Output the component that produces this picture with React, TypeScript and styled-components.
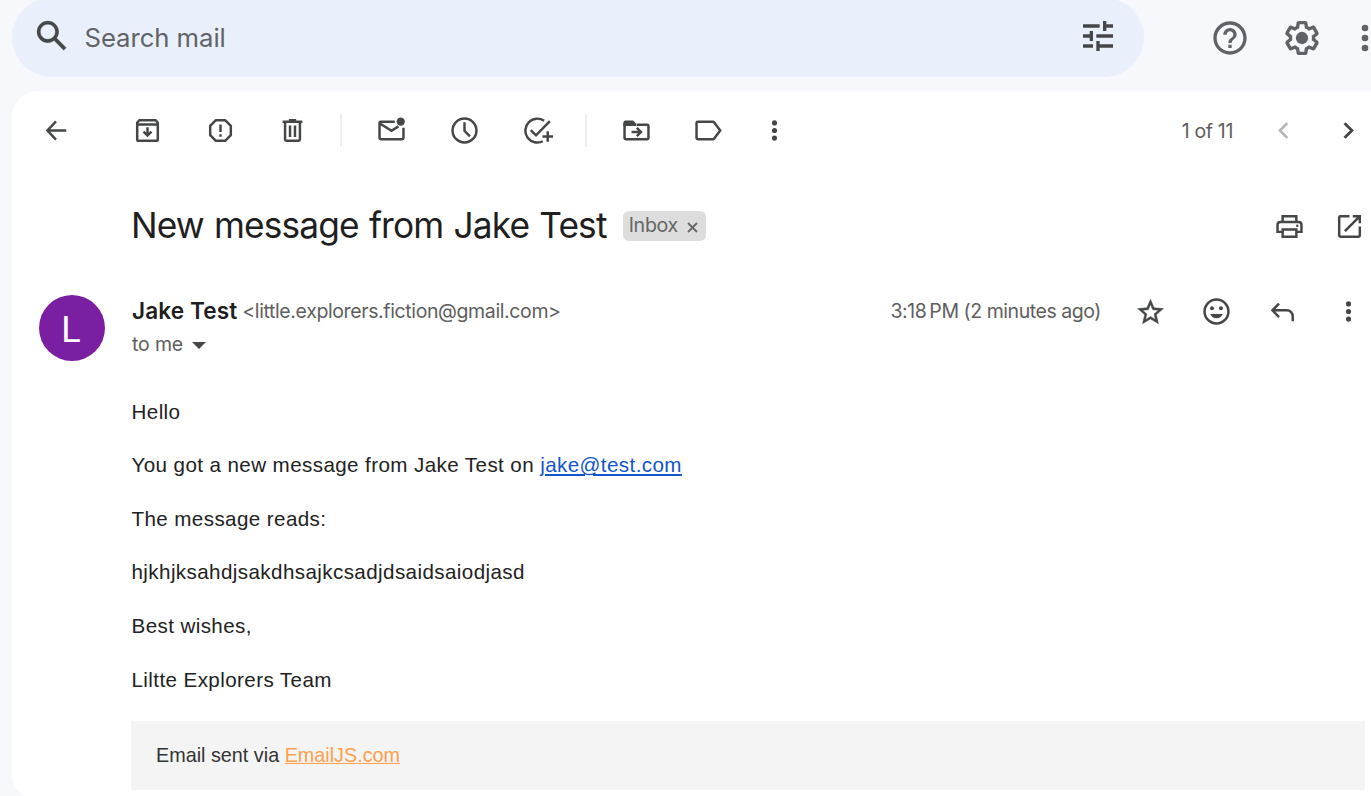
import React from 'react';
import styled, { createGlobalStyle } from 'styled-components';

const GlobalStyle = createGlobalStyle`
  *, *::before, *::after { box-sizing: border-box; }
  html, body { margin: 0; padding: 0; overflow: hidden; background: #f6f8fc; }
  p, h1 { margin: 0; font-weight: 400; }
`;

const uiFont = `Inter, Roboto, sans-serif`;

const Page = styled.div`
  width: 100%;
  height: 796px;
  overflow: hidden;
  background: #f6f8fc;
  color: #444746;
  font-family: ${uiFont};
`;

const Header = styled.header`
  display: flex;
  align-items: flex-start;
  height: 91px;
  padding-left: 12px;
`;

const SearchBar = styled.div`
  display: flex;
  align-items: center;
  flex: none;
  width: 1132px;
  height: 79px;
  margin-top: -2px;
  padding: 0 26px 3px 19.5px;
  border-radius: 40px;
  background: #e9f0fb;
`;

const SearchText = styled.span`
  flex: 1;
  margin-left: 13px;
  padding-top: 2px;
  color: #5f6368;
  font-size: 25.7px;
  font-weight: 370;
  letter-spacing: -0.05px;
`;

const HeaderActions = styled.div`
  display: flex;
  align-items: center;
  flex: none;
  height: 76px;
  margin-left: 50px;
  color: #5f6368;
`;

const Slot = styled.span<{ $w: number }>`
  display: flex;
  align-items: center;
  justify-content: center;
  flex: none;
  width: ${(p) => p.$w}px;
`;

const Card = styled.main`
  height: 709px;
  margin-left: 12px;
  border-radius: 26px 0 0 26px;
  background: #fff;
  overflow: hidden;
`;

const Toolbar = styled.div`
  display: flex;
  align-items: center;
  height: 79px;
  padding-left: 8px;
  margin-right: -10px;
`;

const ToolGroup = styled.div<{ $left?: number }>`
  display: flex;
  margin-left: ${(p) => p.$left ?? 0}px;
`;

const Divider = styled.span`
  width: 2px;
  height: 33px;
  margin: 0 13px 0 11px;
  background: #eceff1;
`;

const Counter = styled.span`
  margin-left: auto;
  margin-right: 18px;
  color: #5e5e5e;
  font-size: 19.5px;
  letter-spacing: -0.35px;
`;

const SubjectRow = styled.div`
  display: flex;
  align-items: center;
  height: 112px;
  padding-left: 119px;
  margin-right: -8px;
`;

const Subject = styled.h1`
  color: #1f1f1f;
  font-size: 35.3px;
  font-weight: 380;
  line-height: 44px;
  letter-spacing: -0.85px;
  word-spacing: 1px;
`;

const Label = styled.span`
  display: flex;
  align-items: center;
  height: 30px;
  margin-left: auto;
  padding: 0 8px 2px 6px;
  border-radius: 6px;
  background: #ddd;
  color: #666;
  font-size: 19.6px;
  letter-spacing: -0.3px;

  svg { margin: 4px 0 0 9px; }
`;

const SubjectLine = styled.div`
  display: flex;
  align-items: center;
  width: 575px;
`;

const SubjectActions = styled.div`
  display: flex;
  margin-left: auto;
`;

const Message = styled.article`
  display: grid;
  grid-template-columns: 119px 1fr;
`;

const Avatar = styled.div`
  display: flex;
  align-items: center;
  justify-content: center;
  width: 66px;
  height: 66px;
  margin: 13px 0 0 27px;
  padding: 3px 2px 0 0;
  border-radius: 50%;
  background: #7b1fa2;
  color: #fff;
  font-family: Roboto, sans-serif;
  font-size: 36px;
`;

const MessageHead = styled.div`
  height: 103px;
  padding-top: 13px;
  margin-right: -10px;
`;

const SenderRow = styled.div`
  display: flex;
  align-items: center;
  height: 33px;
`;

const SenderName = styled.span`
  padding: 0 0 2px 1px;
  color: #1f1f1f;
  font-size: 22.6px;
  font-weight: 600;
  letter-spacing: 0.1px;
`;

const Muted = styled.span<{ $track?: number }>`
  padding-bottom: 2px;
  color: #5e5e5e;
  font-size: 19.5px;
  letter-spacing: ${(p) => p.$track ?? -0.38}px;
`;

const SenderAddress = styled(Muted)`
  margin-left: 5px;
`;

const SentAt = styled(Muted)`
  margin-left: auto;
  margin-right: 16px;
`;

const Recipient = styled.div`
  display: flex;
  align-items: center;
  height: 33px;
  padding-left: 1px;

  svg { margin: 2px 0 0 9px; }
`;

const Body = styled.div`
  grid-column: 2;
  color: #222;
  font-family: "Liberation Sans", Arial, sans-serif;
  font-size: 20.6px;
  line-height: 32.6px;
  letter-spacing: 0.4px;
`;

const Paragraph = styled.p`
  margin-bottom: 21px;
  padding-left: 0.5px;

  &:first-child { margin-top: 10.7px; }
`;

const Link = styled.a<{ $color: string }>`
  color: ${(p) => p.$color};
  text-decoration: underline;
`;

const Footer = styled.footer`
  height: 69px;
  margin: 24.3px 6px 0 0;
  padding: 0 25px;
  background: #f4f4f4;
  color: #333;
  font-size: 19.8px;
  line-height: 69px;
  letter-spacing: 0;
`;

type IconProps = { size?: number; box?: number; children: React.ReactNode };

const Filled = ({ size = 40, box = 24, children }: IconProps) => (
  <svg width={size} height={size} viewBox={`0 0 ${box} ${box}`} fill="currentColor">
    {children}
  </svg>
);

const Line = ({ size = 33, box = 20, children }: IconProps) => (
  <svg
    width={size}
    height={size}
    viewBox={`0 0 ${box} ${box}`}
    fill="none"
    stroke="currentColor"
    strokeWidth="1.5"
  >
    {children}
  </svg>
);

const MoreIcon = ({ size = 33 }: { size?: number }) => (
  <Filled size={size} box={20}>
    <circle cx="10" cy="5.4" r="1.55" />
    <circle cx="10" cy="10" r="1.55" />
    <circle cx="10" cy="14.6" r="1.55" />
  </Filled>
);

const ArchiveIcon = () => (
  <Line>
    <path d="M5 3.75h10l1.25 1.6v9.9a1 1 0 0 1-1 1H4.75a1 1 0 0 1-1-1v-9.9z" strokeLinejoin="round" />
    <path d="M3.75 6.3h12.5M10 8v4.8M7.6 10.7l2.4 2.4 2.4-2.4" />
  </Line>
);

const SpamIcon = () => (
  <Line>
    <path d="M7.2 3.75h5.6l3.45 3.45v5.6l-3.45 3.45H7.2L3.75 12.8V7.2z" strokeLinejoin="round" />
    <path d="M10 6.3v4.6M10 12.3v1.5" />
  </Line>
);

const DeleteIcon = () => (
  <Line>
    <path d="M4 4.75h12M7.8 3.75h4.4M5.5 5v10.5a.75.75 0 0 0 .75.75h7.5a.75.75 0 0 0 .75-.75V5M8.5 7v7M11.5 7v7" />
  </Line>
);

const UnreadIcon = () => (
  <Line>
    <path d="M12 4.75H3.5a.75.75 0 0 0-.75.75v9c0 .4.35.75.75.75h13c.4 0 .75-.35.75-.75V8.3" />
    <path d="M3 5.8l7 4.4 4.2-2.7" />
    <circle cx="15.6" cy="4.6" r="2.5" fill="currentColor" stroke="none" />
  </Line>
);

const SnoozeIcon = () => (
  <Line>
    <circle cx="10" cy="10" r="7.25" />
    <path d="M10 5v5.2l3.3 3.3" />
  </Line>
);

const TaskIcon = () => (
  <Line>
    <path d="M14 4.1a7.25 7.25 0 1 0-.8 12.4M5.9 9.7l3.2 3.2 8.4-8.6M16.2 10.4v6.4M13 13.6h6.4" />
  </Line>
);

const MoveIcon = () => (
  <Line>
    <path d="M2.75 5.5v9c0 .4.35.75.75.75h13c.4 0 .75-.35.75-.75V7.25a.75.75 0 0 0-.75-.75h-6.2" />
    <path d="M2 7.2V5.5A1.5 1.5 0 0 1 3.5 4H8l2 2v1.2z" fill="currentColor" stroke="none" />
    <path d="M7 10.9h5.4M10.2 8.4l2.5 2.5-2.5 2.5" />
  </Line>
);

const LabelIcon = () => (
  <Line>
    <path d="M3.5 4.75h9.2c.25 0 .5.1.65.3L17.1 10l-3.75 4.95a.8.8 0 0 1-.65.3H3.5a.75.75 0 0 1-.75-.75v-9c0-.4.35-.75.75-.75z" />
  </Line>
);

const PrintIcon = () => (
  <Line>
    <path d="M5.85 7V3.75h8.3V7" />
    <path d="M5.5 13.25H2.75V9c0-1 .75-1.75 1.75-1.75h11c1 0 1.75.75 1.75 1.75v4.25H14.5" />
    <path d="M5.85 11.75h8.3v4.5h-8.3z" />
    <circle cx="14.7" cy="9.6" r=".75" fill="currentColor" stroke="none" />
  </Line>
);

const OpenIcon = () => (
  <Line>
    <path d="M10 3.75H4.5a.75.75 0 0 0-.75.75v11c0 .4.35.75.75.75h11c.4 0 .75-.35.75-.75V10M7.2 12.8l8.5-8.5M12 3.75h4.25V8" />
  </Line>
);

const StarIcon = () => (
  <Filled size={31}>
    <path
      d="M22 9.74l-7.19-.62L12 2.5 9.19 9.13 2 9.74l5.46 4.73L5.82 21.5 12 17.77l6.18 3.73-1.63-7.03L22 9.74zM12 15.9l-3.76 2.27 1-4.28-3.32-2.88 4.38-.38L12 6.6l1.71 4.04 4.38.38-3.32 2.88 1 4.28L12 15.9z"
      stroke="currentColor"
      strokeWidth=".35"
    />
  </Filled>
);

const SmileIcon = () => (
  <Line>
    <circle cx="10" cy="10" r="7.25" />
    <g fill="currentColor" stroke="none">
      <circle cx="7.3" cy="8" r="1.2" />
      <circle cx="12.7" cy="8" r="1.2" />
      <path d="M6.2 11.5h7.6a4.1 4.1 0 0 1-7.6 0z" />
    </g>
  </Line>
);

const ReplyIcon = () => (
  <Line>
    <path d="M7.9 5.2L3.9 9.3l4 4.1M4 9.3h8.7a3.5 3.5 0 0 1 3.5 3.5v3.1" />
  </Line>
);

export default function App() {
  return (
    <>
      <GlobalStyle />
      <Page>
        <Header>
          <SearchBar>
            <Filled>
              <path d="M20.49 19l-5.73-5.73C15.53 12.2 16 10.91 16 9.5A6.5 6.5 0 1 0 9.5 16c1.41 0 2.7-.47 3.77-1.24L19 20.49 20.49 19zM5 9.5C5 7.01 7.01 5 9.5 5S14 7.01 14 9.5 11.99 14 9.5 14 5 11.99 5 9.5z" stroke="currentColor" strokeWidth=".2" />
            </Filled>
            <SearchText>Search mail</SearchText>
            <Filled>
              <path d="M3 17v2h6v-2H3zM3 5v2h10V5H3zm10 16v-2h8v-2h-8v-2h-2v6h2zM7 9v2H3v2h4v2h2V9H7zm14 4v-2H11v2h10zm-6-4h2V7h4V5h-4V3h-2v6z" />
            </Filled>
          </SearchBar>
          <HeaderActions>
            <Slot $w={72}>
              <Filled>
                <path d="M11 18h2v-2h-2v2zm1-16C6.48 2 2 6.48 2 12s4.48 10 10 10 10-4.48 10-10S17.52 2 12 2zm0 18c-4.41 0-8-3.59-8-8s3.59-8 8-8 8 3.59 8 8-3.59 8-8 8zm0-14c-2.21 0-4 1.79-4 4h2c0-1.1.9-2 2-2s2 .9 2 2c0 2-3 1.75-3 5h2c0-2.25 3-2.5 3-5 0-2.21-1.79-4-4-4z" />
              </Filled>
            </Slot>
            <Slot $w={72}>
              <Filled>
                <path d="M13.85 22.25h-3.7c-.74 0-1.36-.54-1.45-1.27l-.27-1.89c-.27-.14-.53-.29-.79-.46l-1.8.72c-.7.26-1.47-.03-1.81-.65L2.2 15.53c-.35-.66-.2-1.44.36-1.88l1.53-1.19c-.01-.15-.02-.3-.02-.46 0-.15.01-.31.02-.46l-1.52-1.19c-.59-.45-.74-1.26-.37-1.88l1.85-3.19c.34-.62 1.11-.9 1.79-.63l1.81.73c.26-.17.52-.32.78-.46l.27-1.91c.09-.7.71-1.25 1.44-1.25h3.7c.74 0 1.36.54 1.45 1.27l.27 1.89c.27.14.53.29.79.46l1.8-.72c.71-.26 1.48.03 1.82.65l1.84 3.18c.36.66.2 1.44-.36 1.88l-1.52 1.19c.01.15.02.3.02.46s-.01.31-.02.46l1.52 1.19c.56.45.72 1.23.37 1.86l-1.86 3.22c-.34.62-1.11.9-1.8.63l-1.8-.72c-.26.17-.52.32-.78.46l-.27 1.91c-.1.68-.72 1.22-1.46 1.22zm-3.23-2h2.76l.37-2.55.53-.22c.44-.18.88-.44 1.34-.78l.45-.34 2.38.96 1.38-2.4-2.03-1.58.07-.56c.03-.26.06-.51.06-.78s-.03-.53-.06-.78l-.07-.56 2.03-1.58-1.39-2.4-2.39.96-.45-.35c-.42-.32-.87-.58-1.33-.77l-.52-.22-.37-2.55h-2.76l-.37 2.55-.53.21c-.44.19-.88.44-1.34.79l-.45.33-2.38-.95-1.39 2.39 2.03 1.58-.07.56a7 7 0 0 0-.06.79c0 .26.02.53.06.78l.07.56-2.03 1.58 1.38 2.4 2.39-.96.45.35c.43.33.86.58 1.33.77l.53.22.38 2.55z" />
                <circle cx="12" cy="12" r="3.7" />
              </Filled>
            </Slot>
            <Slot $w={54}>
              <Filled>
                <circle cx="12" cy="6" r="2" />
                <circle cx="12" cy="12" r="2" />
                <circle cx="12" cy="18" r="2" />
              </Filled>
            </Slot>
          </HeaderActions>
        </Header>

        <Card>
          <Toolbar>
            <Slot $w={72}>
              <Line>
                <path d="M15.9 10H4.8M9.7 4.5L4.5 10l5.2 5.5" />
              </Line>
            </Slot>
            <ToolGroup $left={19}>
              <Slot $w={73}><ArchiveIcon /></Slot>
              <Slot $w={73}><SpamIcon /></Slot>
              <Slot $w={71.8}><DeleteIcon /></Slot>
            </ToolGroup>
            <Divider />
            <ToolGroup>
              <Slot $w={72.6}><UnreadIcon /></Slot>
              <Slot $w={73.4}><SnoozeIcon /></Slot>
              <Slot $w={73}><TaskIcon /></Slot>
            </ToolGroup>
            <Divider />
            <ToolGroup $left={1}>
              <Slot $w={72}><MoveIcon /></Slot>
              <Slot $w={72}><LabelIcon /></Slot>
              <Slot $w={60}><MoreIcon /></Slot>
            </ToolGroup>
            <Counter>1 of 11</Counter>
            <Slot $w={65}>
              <Line>
                <g stroke="#b4b5b5">
                  <path d="M12.3 5.6L7.8 10l4.5 4.4" />
                </g>
              </Line>
            </Slot>
            <Slot $w={65}>
              <Line>
                <path d="M7.6 5.6L12.1 10l-4.5 4.4" strokeWidth="1.7" />
              </Line>
            </Slot>
          </Toolbar>

          <SubjectRow>
            <SubjectLine>
              <Subject>New message from Jake Test</Subject>
              <Label>
                Inbox
                <svg width="11" height="11" viewBox="0 0 11 11" stroke="currentColor" strokeWidth="1.8">
                  <path d="M1 1l9 9M10 1l-9 9" />
                </svg>
              </Label>
            </SubjectLine>
            <SubjectActions>
              <Slot $w={60}><PrintIcon /></Slot>
              <Slot $w={60}><OpenIcon /></Slot>
            </SubjectActions>
          </SubjectRow>

          <Message>
            <Avatar>L</Avatar>
            <MessageHead>
              <SenderRow>
                <SenderName>Jake Test</SenderName>
                <SenderAddress>&lt;little.explorers.fiction@gmail.com&gt;</SenderAddress>
                <SentAt $track={-0.45}>3:18&#8239;PM (2 minutes ago)</SentAt>
                <Slot $w={66}><StarIcon /></Slot>
                <Slot $w={66}><SmileIcon /></Slot>
                <Slot $w={66}><ReplyIcon /></Slot>
                <Slot $w={66}><MoreIcon /></Slot>
              </SenderRow>
              <Recipient>
                <Muted $track={-0.15}>to me</Muted>
                <svg width="14" height="7" viewBox="0 0 14 7" fill="currentColor">
                  <path d="M0 0h14L7 7z" />
                </svg>
              </Recipient>
            </MessageHead>
            <Body>
              <Paragraph>Hello</Paragraph>
              <Paragraph>
                You got a new message from Jake Test on <Link $color="#1155cc">jake@test.com</Link>
              </Paragraph>
              <Paragraph>The message reads:</Paragraph>
              <Paragraph>hjkhjksahdjsakdhsajkcsadjdsaidsaiodjasd</Paragraph>
              <Paragraph>Best wishes,</Paragraph>
              <Paragraph>Liltte Explorers Team</Paragraph>
              <Footer>
                Email sent via <Link $color="#ff9f4a">EmailJS.com</Link>
              </Footer>
            </Body>
          </Message>
        </Card>
      </Page>
    </>
  );
}
